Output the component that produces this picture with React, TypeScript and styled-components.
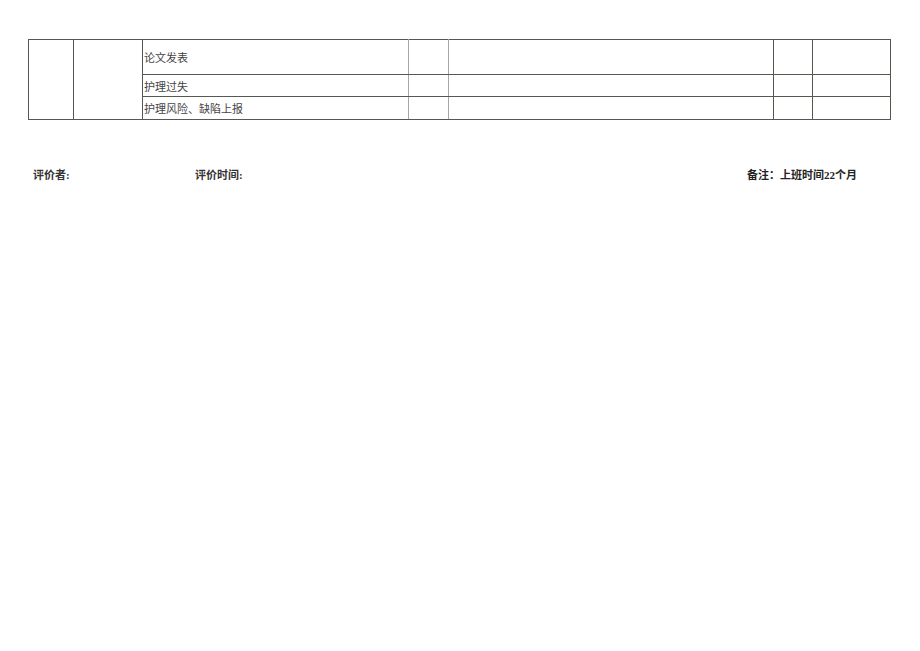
import React from "react";
import styled, { createGlobalStyle } from "styled-components";

const GlobalStyle = createGlobalStyle`
	html, body {
		margin: 0;
		padding: 0;
		background: #ffffff;
	}
	body {
		font-family: "Liberation Serif", "Noto Sans CJK SC", serif;
		color: #222;
	}
`;

const rows = [
	{ label: "论文发表", height: 35 },
	{ label: "护理过失", height: 22 },
	{ label: "护理风险、缺陷上报", height: 23 },
];

const colWidths = [45, 69, 266, 40, 325, 39, 78];

const App: React.FC = () => {
	return (
		<Page>
			<GlobalStyle />
			<Table>
				<colgroup>
					{colWidths.map((w, i) => (
						<col key={i} style={{ width: w }} />
					))}
				</colgroup>
				<tbody>
					{rows.map((row, i) => (
						<Row key={row.label} style={{ height: row.height }}>
							{i === 0 && (
								<>
									<Cell rowSpan={3} />
									<Cell rowSpan={3} />
								</>
							)}
							<LabelCell $top={i > 0}>{row.label}</LabelCell>
							<Cell $top={i > 0} $light />
							<Cell $top={i > 0} />
							<Cell $top={i > 0} />
							<Cell $top={i > 0} />
						</Row>
					))}
				</tbody>
			</Table>
			<Footer>
				<Note $width={162}>评价者:</Note>
				<Note $width={200}>评价时间:</Note>
				<Spacer />
				<Remark>备注：上班时间22个月</Remark>
			</Footer>
		</Page>
	);
};

export default App;

const Page = styled.div`
	width: 920px;
	height: 651px;
	padding: 39px 30px 0 28px;
	box-sizing: border-box;
`;

const Table = styled.table`
	width: 862px;
	border-collapse: collapse;
	table-layout: fixed;
	border: 1px solid #545a52;
`;

const Row = styled.tr``;

const Cell = styled.td<{ $top?: boolean; $light?: boolean }>`
	padding: 0;
	border-left: 1px solid ${(p) => (p.$light ? "#a9a4ab" : "#535a50")};
	border-right: 1px solid ${(p) => (p.$light ? "#a9a4ab" : "#535a50")};
	border-top: 1px solid ${(p) => (p.$top ? "#5a4b66" : "#545a52")};
	border-bottom: 1px solid #545a52;
`;

const LabelCell = styled.td<{ $top?: boolean }>`
	padding: 0 0 0 1px;
	font-size: 11px;
	color: #444;
	vertical-align: middle;
	white-space: nowrap;
	border-left: 1px solid #5a4b66;
	border-right: 1px solid #a9a4ab;
	border-top: 1px solid ${(p) => (p.$top ? "#5a4b66" : "#545a52")};
	border-bottom: 1px solid #545a52;
`;

const Footer = styled.div`
	display: flex;
	align-items: center;
	margin-top: 46px;
	padding: 0 33px 0 5px;
	font-size: 11px;
	font-weight: bold;
	color: #222;
`;

const Note = styled.span<{ $width: number }>`
	width: ${(p) => p.$width}px;
	flex: none;
	font-weight: 600;
	color: #333;
`;

const Spacer = styled.div`
	flex: 1;
`;

const Remark = styled.span`
	font-size: 11px;
	font-weight: bold;
`;
